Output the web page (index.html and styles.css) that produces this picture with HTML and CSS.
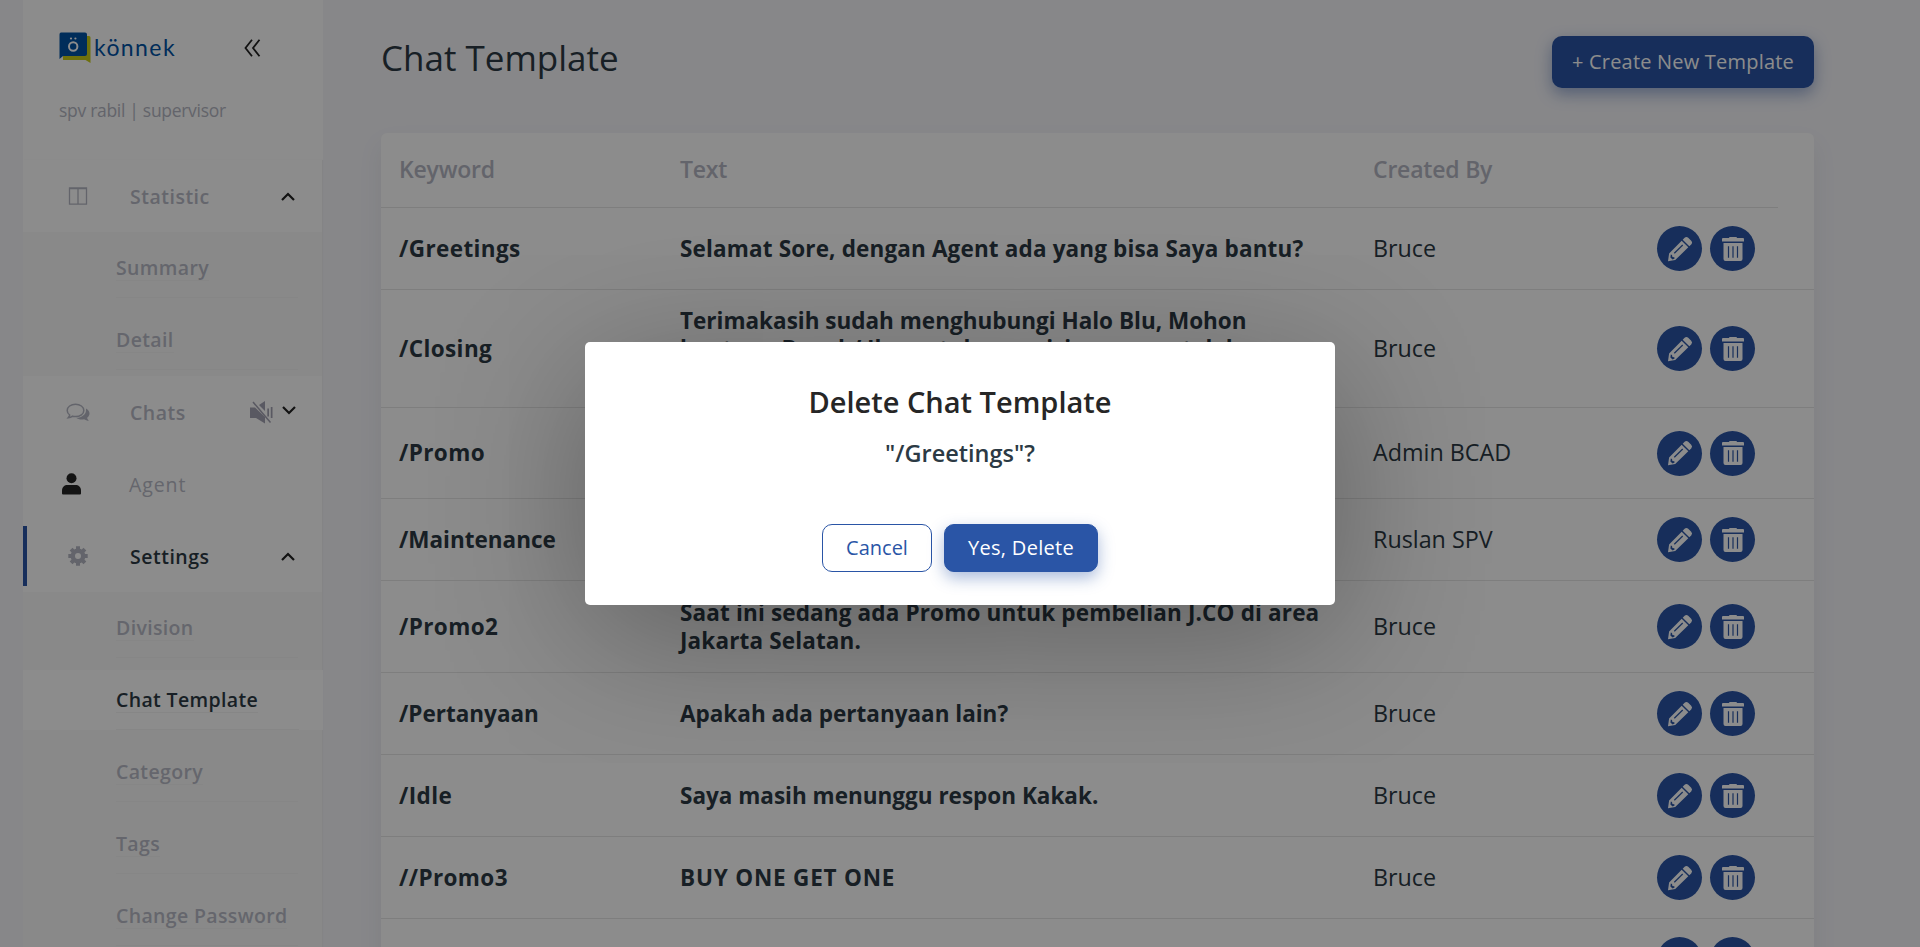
FILE: index.html
```html
<!DOCTYPE html>
<html lang="en">
<head>
<meta charset="utf-8">
<title>Chat Template</title>
<link rel="stylesheet" href="styles.css">
</head>
<body>
<svg class="defs" width="0" height="0">
  <symbol id="pencil" viewBox="0 0 26 26">
    <path fill="currentColor" d="M17.6 1.8a2.6 2.6 0 0 1 3.6 0l3 3a2.6 2.6 0 0 1 0 3.6l-1.9 1.9-6.6-6.6zM14.7 4.7l6.6 6.6L8.2 24.1 1 25.2l1.100-7.700z"/>
    <path stroke="#2a55a6" stroke-width="1.200" fill="none" d="M7.300 17.300 15.700 9"/>
    <path fill="#2a55a6" d="M3.800 18.600l1.200.4.4 1.900 1.900.4.300 1.200-2 1-2.200-2z"/>
  </symbol>
  <symbol id="trash" viewBox="0 0 22 24">
    <path fill="currentColor" d="M7 1q0-1 1-1h6q1 0 1 1h6q1 0 1 1v2.500H0V2q0-1 1-1zM1.500 6h19v16q0 2-2 2h-15q-2 0-2-2z"/>
    <path stroke="#2a55a6" stroke-width="1.200" d="M6.500 9.200v11.600M11 9.200v11.600M15.500 9.200v11.600"/>
  </symbol>
  <symbol id="chevron" viewBox="0 0 14 9"><path fill="none" stroke="#222" stroke-width="2.200" d="M1 8l6-6 6 6"/></symbol>
</svg>
<div class="page">
  <aside class="sidebar">
    <div class="brand-area">
      <div class="brand">
        <svg width="32" height="31" viewBox="0 0 32 31"><path fill="#c9cc16" d="M4 4h26q1.500 0 1.500 1.500V31l-5-3H4z"/><path fill="#0052a4" d="M2 .5h24q2 0 2 2V22q0 2-2 2H4l-3.500 3V2.500q0-2 1.500-2z"/><circle cx="14.200" cy="14.500" r="4.200" fill="none" stroke="#fff" stroke-width="2"/><circle cx="12" cy="6.500" r="1.100" fill="#fff"/><circle cx="16.400" cy="6.500" r="1.100" fill="#fff"/></svg>
        <span class="brand-name">könnek</span>
        <svg class="collapse" width="17" height="18" viewBox="0 0 17 18"><path fill="none" stroke="#222" stroke-width="1.800" d="M8 .8 1.500 9 8 17.200M15.500.8 9 9l6.500 8.200"/></svg>
      </div>
      <div class="user">spv rabil | supervisor</div>
    </div>
    <nav class="menu">
      <div class="item"><svg class="icon" width="20" height="18" viewBox="0 0 20 18"><path fill="none" stroke="#b5b7c3" stroke-width="1.300" d="M1.500.8h17v16.400h-17zM10 1v16M1 1.600h18"/></svg><span class="label">Statistic</span><svg class="chev" width="14" height="9"><use href="#chevron"/></svg></div>
      <div class="submenu">
        <div class="sub"><div class="sub-in"><span>Summary</span></div></div>
        <div class="sub"><div class="sub-in"><span>Detail</span></div></div>
      </div>
      <div class="item"><svg class="icon wide" width="24" height="19" viewBox="0 0 24 19"><path fill="none" stroke="#b5b7c3" stroke-width="1.500" d="M9.500 1.200c4.700 0 8.300 2.700 8.300 6.200s-3.600 6.200-8.300 6.200c-1 0-2-.1-2.900-.4-1.200.9-2.600 1.500-4.400 1.600.8-.9 1.300-1.700 1.500-2.800C2.200 10.900 1.200 9.300 1.200 7.400c0-3.500 3.600-6.200 8.300-6.200z"/><path fill="#b5b7c3" d="M20 5.500c2.200 1.200 3.500 2.900 3.500 5 0 1.700-.9 3.200-2.400 4.300.3 1.300 1 2.200 1.900 3-2 0-3.600-.6-4.900-1.500-3 .7-6 .1-8-1.500C15.500 15 20 11.500 20 7.500z"/></svg><span class="label">Chats</span>
        <svg class="mute" width="23" height="23" viewBox="0 0 23 23"><path fill="#a3a2b2" d="M0 6.500h5l10 9.500v6.500L6 17H0zM9 4l6-4v10zM17.300 7.500h1.700v8h-1.700zM20.800 6h1.700v11h-1.700z"/><path stroke="#a3a2b2" stroke-width="1.500" d="M3 1l17.500 20.500"/></svg>
        <svg class="chev down" width="14" height="9"><use href="#chevron"/></svg></div>
      <div class="item"><svg class="icon person" width="19" height="22" viewBox="0 0 19 22"><circle cx="9.500" cy="5.200" r="5" fill="#262626"/><path fill="#262626" d="M0 20.500v-3C0 14 2.500 12 5.500 12h8c3 0 5.500 2 5.500 5.500v3q0 1-1 1H1q-1 0-1-1z"/></svg><span class="label regular">Agent</span></div>
      <div class="item active"><svg class="icon" width="20" height="20" viewBox="-10 -10 20 20"><circle r="5.200" fill="none" stroke="#b5b7c3" stroke-width="4.400"/><path stroke="#b5b7c3" stroke-width="4" d="M0-9.700v4M0 9.700v-4M-9.700 0h4M9.700 0h-4M-6.900-6.900l3 3M6.900 6.900l-3-3M-6.900 6.900l3-3M6.900-6.900l-3 3"/></svg><span class="label">Settings</span><svg class="chev" width="14" height="9"><use href="#chevron"/></svg></div>
      <div class="submenu">
        <div class="sub"><div class="sub-in"><span>Division</span></div></div>
        <div class="sub current"><div class="sub-in"><span>Chat Template</span></div></div>
        <div class="sub"><div class="sub-in"><span>Category</span></div></div>
        <div class="sub"><div class="sub-in"><span>Tags</span></div></div>
        <div class="sub"><div class="sub-in"><span>Change Password</span></div></div>
      </div>
    </nav>
  </aside>
  <main class="main">
    <header class="top"><h1>Chat Template</h1><button class="create">+ Create New Template</button></header>
    <section class="card">
      <div class="row head"><div>Keyword</div><div>Text</div><div>Created By</div></div>
      <div class="row"><div class="key">/Greetings</div><div class="text loose">Selamat Sore, dengan Agent ada yang bisa Saya bantu?</div><div class="by">Bruce</div><div class="acts"><i><svg width="26" height="26"><use href="#pencil"/></svg></i><i><svg width="22" height="24"><use href="#trash"/></svg></i></div></div>
      <div class="row three"><div class="key">/Closing</div><div class="text">Terimakasih sudah menghubungi Halo Blu, Mohon<br>bantuan Bapak/ Ibu untuk mengisi survey setelah<br>percakapan ini.</div><div class="by">Bruce</div><div class="acts"><i><svg width="26" height="26"><use href="#pencil"/></svg></i><i><svg width="22" height="24"><use href="#trash"/></svg></i></div></div>
      <div class="row two"><div class="key">/Promo</div><div class="text"></div><div class="by">Admin BCAD</div><div class="acts"><i><svg width="26" height="26"><use href="#pencil"/></svg></i><i><svg width="22" height="24"><use href="#trash"/></svg></i></div></div>
      <div class="row"><div class="key tight">/Maintenance</div><div class="text"></div><div class="by">Ruslan SPV</div><div class="acts"><i><svg width="26" height="26"><use href="#pencil"/></svg></i><i><svg width="22" height="24"><use href="#trash"/></svg></i></div></div>
      <div class="row two tall"><div class="key">/Promo2</div><div class="text loose">Saat ini sedang ada Promo untuk pembelian J.CO di area<br>Jakarta Selatan.</div><div class="by">Bruce</div><div class="acts"><i><svg width="26" height="26"><use href="#pencil"/></svg></i><i><svg width="22" height="24"><use href="#trash"/></svg></i></div></div>
      <div class="row"><div class="key tight">/Pertanyaan</div><div class="text">Apakah ada pertanyaan lain?</div><div class="by">Bruce</div><div class="acts"><i><svg width="26" height="26"><use href="#pencil"/></svg></i><i><svg width="22" height="24"><use href="#trash"/></svg></i></div></div>
      <div class="row"><div class="key">/Idle</div><div class="text">Saya masih menunggu respon Kakak.</div><div class="by">Bruce</div><div class="acts"><i><svg width="26" height="26"><use href="#pencil"/></svg></i><i><svg width="22" height="24"><use href="#trash"/></svg></i></div></div>
      <div class="row"><div class="key">//Promo3</div><div class="text caps">BUY ONE GET ONE</div><div class="by">Bruce</div><div class="acts"><i><svg width="26" height="26"><use href="#pencil"/></svg></i><i><svg width="22" height="24"><use href="#trash"/></svg></i></div></div>
      <div class="row"><div class="key"></div><div class="text"></div><div class="by"></div><div class="acts"><i></i><i></i></div></div>
    </section>
  </main>
</div>
<div class="overlay">
  <div class="modal">
    <h2>Delete Chat Template</h2>
    <p>"/Greetings"?</p>
    <div class="modal-buttons"><button class="cancel">Cancel</button><button class="confirm">Yes, Delete</button></div>
  </div>
</div>
</body>
</html>
```
FILE: styles.css
```css
* { box-sizing: border-box; }
body { margin: 0; height: 947px; overflow: hidden; font-family: "Open Sans", "Noto Sans", sans-serif; color: #2c3a44; }
button { font-family: inherit; }
.defs { display: block; height: 0; }
.page { display: flex; height: 947px; overflow: hidden; background: #f6f6fa; padding-left: 23px; }

.sidebar { width: 300px; flex: none; }
.brand-area { height: 160px; background: #fff; padding: 32px 0 0 36px; }
.brand { display: flex; height: 31px; }
.brand-name { font-family: Lato, sans-serif; font-size: 23px; line-height: 30px; color: #0052a4; margin-left: 3px; width: 80px; letter-spacing: 1.4px; font-weight: 400; }
.collapse { margin: 7px 0 0 70px; }
.user { margin-top: 36px; line-height: 23px; font-size: 17.500px; letter-spacing: -.3px; color: #b5b7c3; white-space: nowrap; }
.menu { width: 299px; height: 787px; background: #fff; box-shadow: 1px 0 1px #f0f0f3; }
.item { display: flex; align-items: center; height: 72px; padding-left: 45px; border-top: 6px solid transparent; border-bottom: 6px solid transparent; position: relative; color: #b8bac6; font-size: 19.500px; letter-spacing: .5px; font-weight: 600; }
.item .icon { flex: none; margin-right: 42px; }
.item .wide { margin: 0 40px 0 -2px; }
.item .person { margin: 0 48px 0 -6px; }
.label { width: 114px; }
.label.regular { font-weight: 400; letter-spacing: .9px; }
.item.active { color: #2c3a44; }
.item.active::before { content: ""; position: absolute; left: 0; top: 0; width: 4px; height: 60px; background: #2a55a6; }
.chev { margin-left: 37px; }
.down { transform: rotate(180deg); margin-left: 9px; margin-top: -4px; }
.mute { margin-left: 6px; }
.submenu { background: #fafafa; padding: 6px 0; display: flex; flex-direction: column; gap: 12px; }
.sub { height: 60px; padding: 0 24px 0 93px; color: #b8bac6; font-size: 19.500px; letter-spacing: .35px; font-weight: 600; }
.sub-in { height: 60px; padding-top: 16px; border-bottom: 1px solid #f5f5f5; white-space: nowrap; }
.sub-in span { display: inline-block; line-height: 25px; border-bottom: 1px solid #f5f5f5; }
.current { background: #fff; color: #2c3a44; width: 300px; }

.main { margin-left: 58px; width: 1433px; }
.top { height: 133px; padding-top: 36px; display: flex; justify-content: space-between; align-items: flex-start; }
h1 { margin: 0; font-size: 35px; line-height: 44px; font-weight: 400; }
.create { width: 262px; height: 52px; border: 0; border-radius: 10px; background: #2a55a6; color: #fff; font-size: 20px; letter-spacing: .2px; padding: 0 0 2px; box-shadow: 0 6px 16px rgba(42,85,166,.45); white-space: nowrap; }
.card { background: #fff; border-radius: 6px 6px 0 0; box-shadow: 0 12px 24px rgba(40,50,90,.08); height: 830px; }
.row { display: grid; grid-template-columns: 281px 693px 284px 1fr; align-items: center; height: 82px; padding-left: 18px; border-bottom: 1px solid #e6e6e6; font-size: 22.500px; white-space: nowrap; }
.head { width: 1397px; height: 75px; font-weight: 600; color: #b5b7c3; font-size: 23px; letter-spacing: -.2px; padding-bottom: 2px; }
.three { height: 118px; }
.two { height: 91px; }
.tall { height: 92px; }
.key, .text { font-weight: 700; line-height: 27.400px; }
.key { letter-spacing: .4px; }
.tight { letter-spacing: 0; }
.loose { letter-spacing: .15px; }
.caps { letter-spacing: .8px; }
.by { font-size: 23.300px; line-height: 30px; padding-bottom: 2px; }
.acts { display: flex; gap: 8px; }
.acts i { width: 45px; height: 45px; border-radius: 50%; background: #2a55a6; color: #fff; display: flex; align-items: center; justify-content: center; }

.overlay { position: absolute; inset: 0; height: 947px; display: flex; justify-content: center; align-items: flex-start; padding-top: 342px; overflow: hidden; background: rgba(0,0,0,.45); }
.modal { width: 750px; height: 263px; background: #fff; border-radius: 5px; text-align: center; box-shadow: 0 30px 150px rgba(0,0,0,.32); padding-top: 40px; }
h2 { margin: 0; font-size: 29px; line-height: 40px; font-weight: 600; color: #262626; }
.modal p { margin: 15px 0 0; font-size: 23.500px; line-height: 32px; font-weight: 600; }
.modal-buttons { margin-top: 55px; display: flex; justify-content: center; gap: 12px; }
.modal-buttons button { height: 48px; border-radius: 10px; font-size: 20px; padding: 0 0 2px; border: 1px solid #2a55a6; }
.cancel { width: 110px; background: #fff; color: #2a55a6; }
.modal-buttons .confirm { width: 154px; background: #2a55a6; color: #fff; letter-spacing: .3px; box-shadow: 0 6px 16px rgba(42,85,166,.4); }
```
